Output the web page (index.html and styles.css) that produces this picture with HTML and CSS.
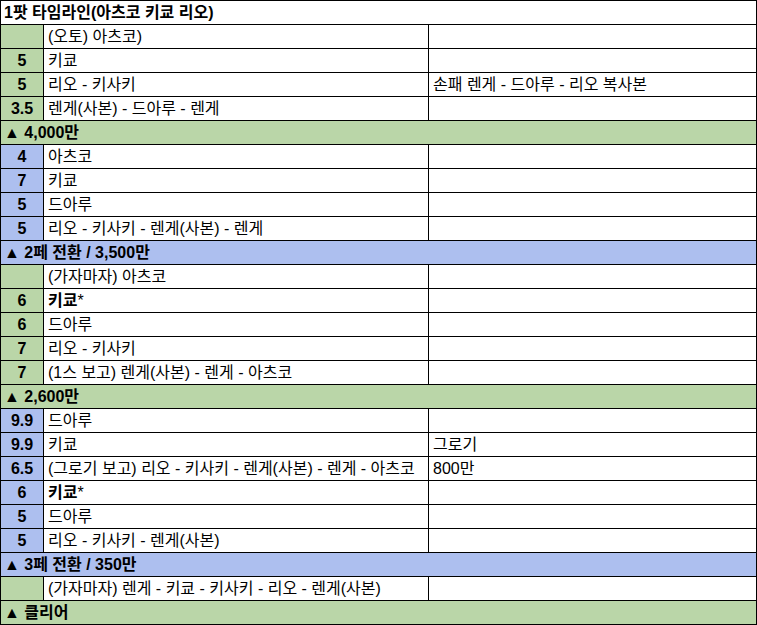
FILE: index.html
```html
<!DOCTYPE html>
<html lang="ko">
<head>
<meta charset="utf-8">
<link rel="stylesheet" href="styles.css">
</head>
<body>
<table class="sheet">
<colgroup><col class="c1"><col class="c2"><col class="c3"></colgroup>
<tr><td class="head white" colspan="3">1팟 타임라인(아츠코 키쿄 리오)</td></tr>
<tr><td class="num g"></td><td>(오토) 아츠코)</td><td></td></tr>
<tr><td class="num g">5</td><td>키쿄</td><td></td></tr>
<tr><td class="num g">5</td><td>리오 - 키사키</td><td>손패 렌게 - 드아루 - 리오 복사본</td></tr>
<tr><td class="num g">3.5</td><td>렌게(사본) - 드아루 - 렌게</td><td></td></tr>
<tr><td class="head g" colspan="3">▲ 4,000만</td></tr>
<tr><td class="num b">4</td><td>아츠코</td><td></td></tr>
<tr><td class="num b">7</td><td>키쿄</td><td></td></tr>
<tr><td class="num b">5</td><td>드아루</td><td></td></tr>
<tr><td class="num b">5</td><td>리오 - 키사키 - 렌게(사본) - 렌게</td><td></td></tr>
<tr><td class="head b" colspan="3">▲ 2페 전환 / 3,500만</td></tr>
<tr><td class="num g"></td><td>(가자마자) 아츠코</td><td></td></tr>
<tr><td class="num g">6</td><td><b>키쿄</b>*</td><td></td></tr>
<tr><td class="num g">6</td><td>드아루</td><td></td></tr>
<tr><td class="num g">7</td><td>리오 - 키사키</td><td></td></tr>
<tr><td class="num g">7</td><td>(1스 보고) 렌게(사본) - 렌게 - 아츠코</td><td></td></tr>
<tr><td class="head g" colspan="3">▲ 2,600만</td></tr>
<tr><td class="num b">9.9</td><td>드아루</td><td></td></tr>
<tr><td class="num b">9.9</td><td>키쿄</td><td>그로기</td></tr>
<tr><td class="num b">6.5</td><td>(그로기 보고) 리오 - 키사키 - 렌게(사본) - 렌게 - 아츠코</td><td>800만</td></tr>
<tr><td class="num b">6</td><td><b>키쿄</b>*</td><td></td></tr>
<tr><td class="num b">5</td><td>드아루</td><td></td></tr>
<tr><td class="num b">5</td><td>리오 - 키사키 - 렌게(사본)</td><td></td></tr>
<tr><td class="head b" colspan="3">▲ 3페 전환 / 350만</td></tr>
<tr><td class="num g"></td><td>(가자마자) 렌게 - 키쿄 - 키사키 - 리오 - 렌게(사본)</td><td></td></tr>
<tr><td class="head g" colspan="3">▲ 클리어</td></tr>
</table>
</body>
</html>
```
FILE: styles.css
```css
html, body {
  margin: 0;
  padding: 0;
  background: #ffffff;
}
.sheet {
  border-collapse: collapse;
  table-layout: fixed;
  width: 756px;
  font-family: "Liberation Sans", Arial, "Noto Sans CJK KR", sans-serif;
  font-size: 16px;
  color: #000;
}
.c1 { width: 43px; }
.c2 { width: 385px; }
.c3 { width: 328px; }
.sheet td {
  border: 1px solid #000;
  height: 24px;
  padding: 0 3px 0 4px;
  box-sizing: border-box;
  line-height: 18px;
  vertical-align: bottom;
  padding-bottom: 2px;
  white-space: nowrap;
  overflow: hidden;
}
.sheet td.num {
  text-align: center;
  font-weight: bold;
  padding-left: 2px;
  padding-right: 2px;
}
.sheet td.head {
  font-weight: bold;
  padding-left: 3px;
}
.g { background: #bad6a8; }
.b { background: #adbfef; }
.white { background: #fff; }
```
